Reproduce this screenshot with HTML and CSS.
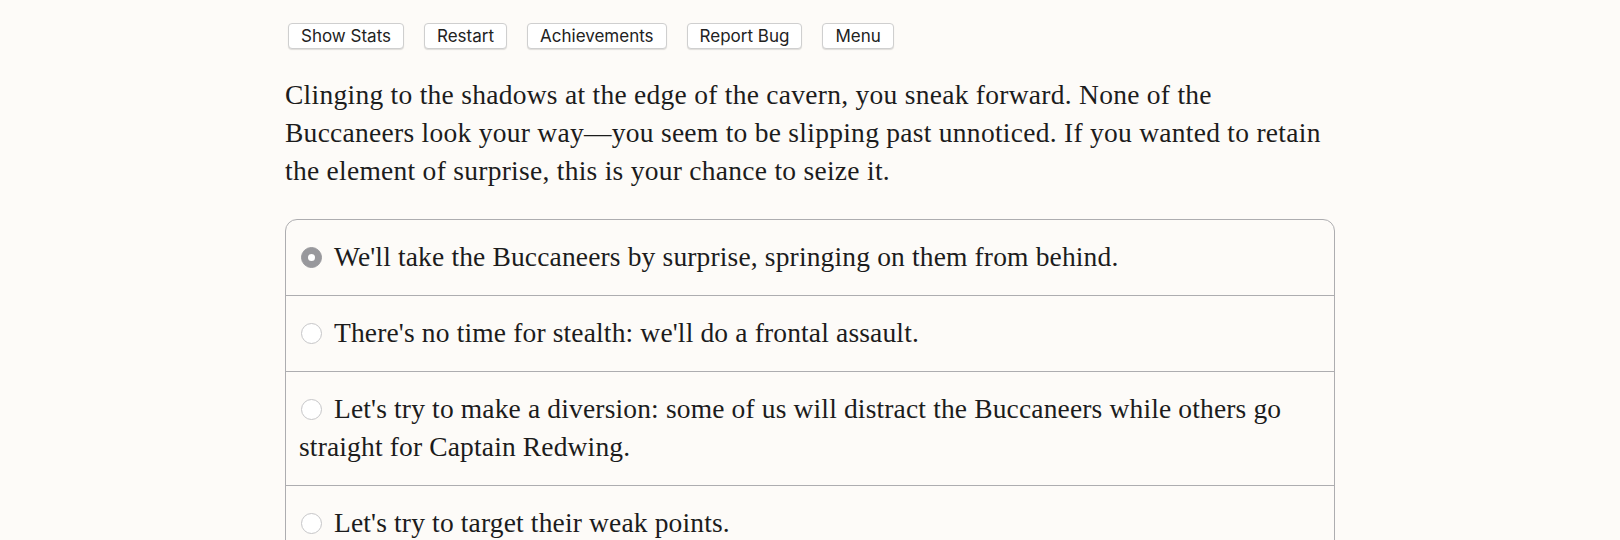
FILE: index.html
```html
<!DOCTYPE html>
<html>
<head>
<meta charset="utf-8">
<link rel="stylesheet" href="styles.css">
</head>
<body>
<div class="container">
  <div class="toolbar">
    <button class="btn">Show Stats</button>
    <button class="btn">Restart</button>
    <button class="btn">Achievements</button>
    <button class="btn">Report Bug</button>
    <button class="btn">Menu</button>
  </div>
  <p class="story">Clinging to the shadows at the edge of the cavern, you sneak forward. None of the Buccaneers look your way—you seem to be slipping past unnoticed. If you wanted to retain the element of surprise, this is your chance to seize it.</p>
  <div class="choices">
    <label class="choice"><span class="radio checked"></span>We'll take the Buccaneers by surprise, springing on them from behind.</label>
    <label class="choice"><span class="radio"></span>There's no time for stealth: we'll do a frontal assault.</label>
    <label class="choice"><span class="radio"></span>Let's try to make a diversion: some of us will distract the Buccaneers while others go straight for Captain Redwing.</label>
    <label class="choice"><span class="radio"></span>Let's try to target their weak points.</label>
  </div>
</div>
</body>
</html>
```
FILE: styles.css
```css
html, body {
  margin: 0;
  padding: 0;
  background: #fdfbf8;
}
body {
  color: #1c1c1c;
  font-family: "Liberation Serif", serif;
}
.container {
  width: 1050px;
  margin: 0 auto;
  padding-top: 23px;
}
.toolbar {
  display: flex;
  gap: 20px;
  padding-left: 3px;
}
.btn {
  font-family: Inter, "Liberation Sans", sans-serif;
  font-size: 17px;
  color: #222;
  background: #fff;
  border: 1px solid #cfcfcf;
  border-radius: 4px;
  box-shadow: 0 1px 1px rgba(0,0,0,0.12);
  height: 26px;
  padding: 0 12px;
  line-height: 24px;
}
.story {
  font-size: 27.5px;
  letter-spacing: 0.27px;
  line-height: 38px;
  margin: 27px 0 29px;
}
.choices {
  border: 1px solid #adadb0;
  border-radius: 12px;
  overflow: hidden;
}
.choice {
  display: block;
  font-size: 27.5px;
  letter-spacing: 0.15px;
  line-height: 38px;
  padding: 18px 13px 19px;
  border-top: 1px solid #adadb0;
}
.choice:first-child {
  border-top: none;
}
.radio {
  display: inline-block;
  box-sizing: border-box;
  width: 21px;
  height: 21px;
  border-radius: 50%;
  background: #fff;
  border: 1px solid #c6c6c8;
  vertical-align: -2px;
  margin: 0 12px 0 2px;
  position: relative;
}
.radio.checked {
  background: #98989c;
  border-color: #98989c;
}
.radio.checked::after {
  content: "";
  position: absolute;
  width: 7px;
  height: 7px;
  border-radius: 50%;
  background: #fff;
  left: 6px;
  top: 6px;
}
```
